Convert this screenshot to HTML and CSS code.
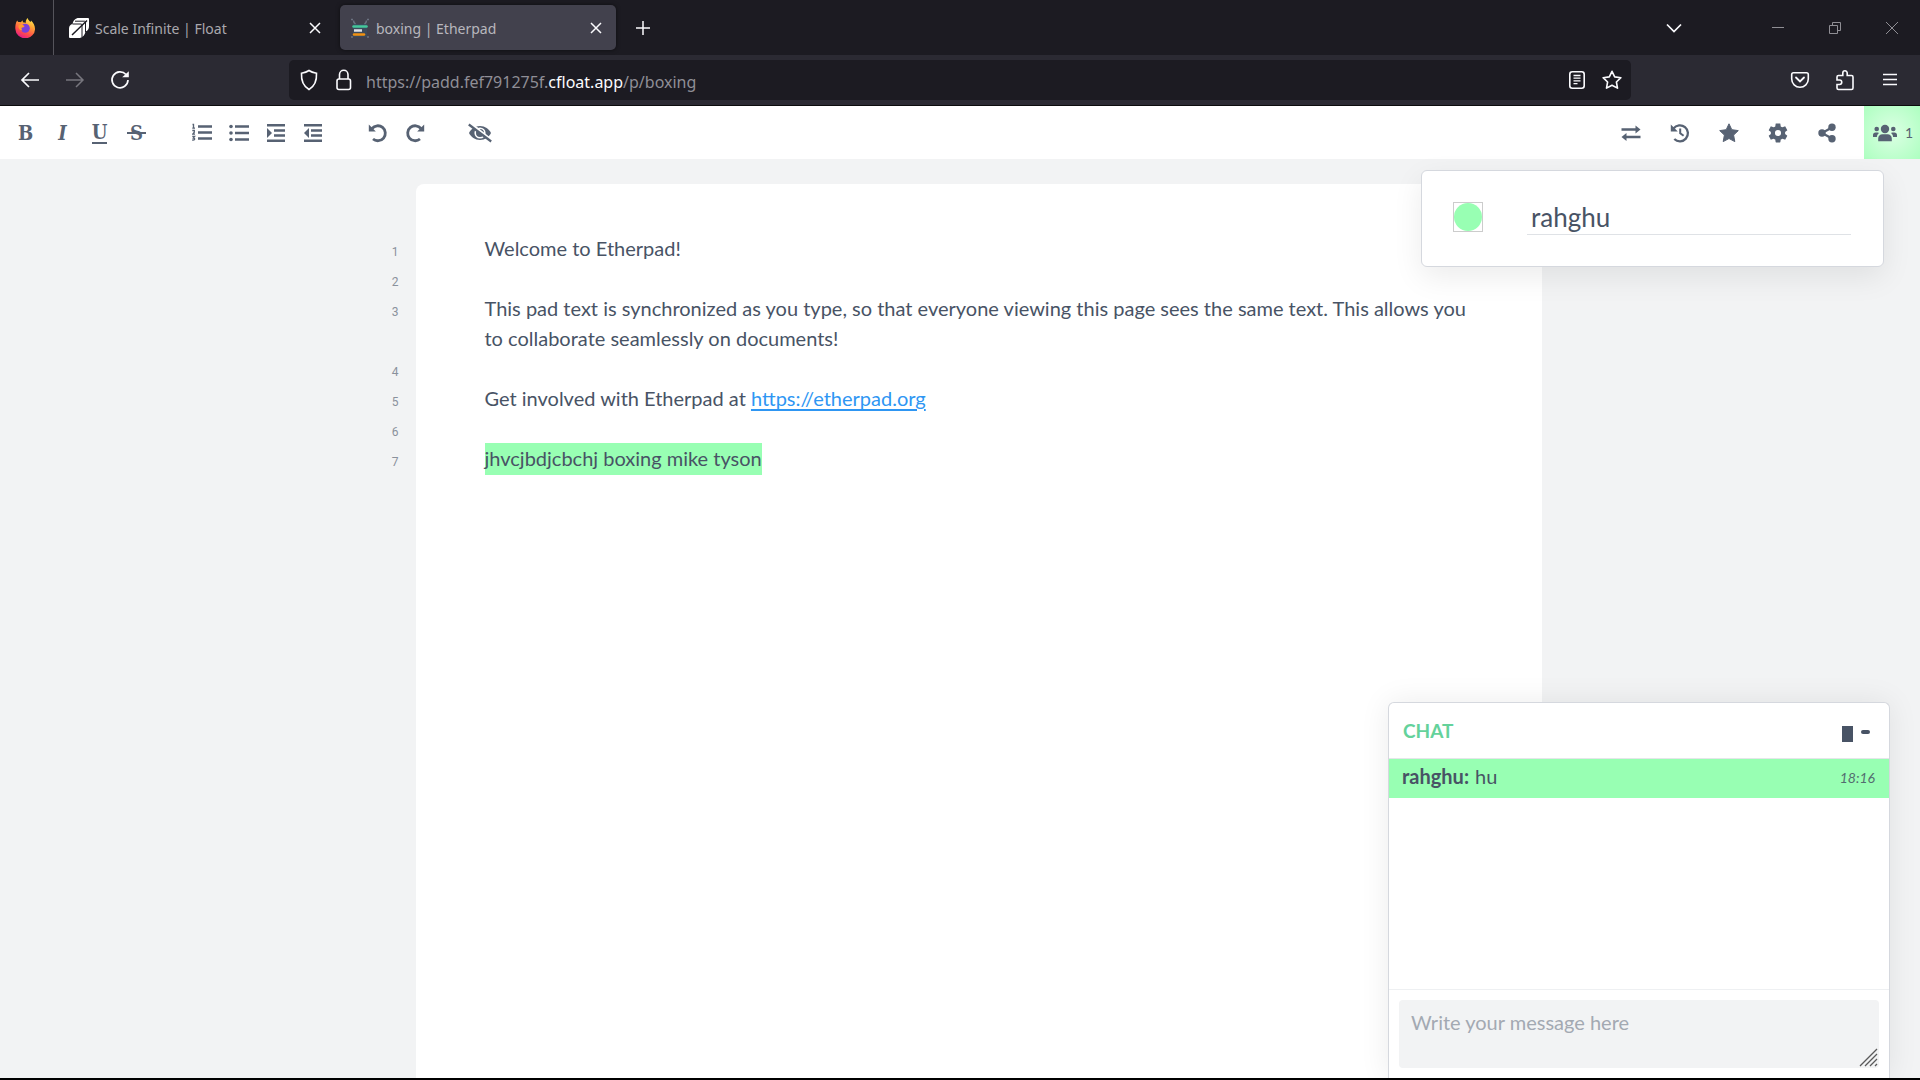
FILE: index.html
```
<!DOCTYPE html>
<html lang="en">
<head>
<meta charset="utf-8">
<title>boxing | Etherpad</title>
<link rel="stylesheet" href="styles.css">
</head>
<body>
<header class="browser">
  <div class="tabbar">
    <div class="brand">
      <svg width="20" height="20" viewBox="0 0 20 20" aria-hidden="true">
        <defs>
          <linearGradient id="fire" x1="0.8" y1="0" x2="0.3" y2="1"><stop offset="0" stop-color="#fff44f"/><stop offset="0.35" stop-color="#ffa436"/><stop offset="0.7" stop-color="#ff4f4a"/><stop offset="1" stop-color="#e3178b"/></linearGradient>
        </defs>
        <path fill="url(#fire)" d="M1.2 4.2c.3-.8.8-1.4 1.2-1.8.1.7.5 1.3 1 1.7C4.200 4 5 4 5.900 4.200 6.400 3.400 7.200 2.800 8 2.600 7.700 3.200 7.700 3.800 8 4.300c1.200.2 2.200.4 2.600 1 0-2.200.7-4.200 2.100-5.300.2 1.700 1.500 2.600 2.700 3.900.5-.3.6-.8.6-1.400 2.400 2.200 4 5 4 8.200a9.800 9.300 0 0 1-19.600.6C.1 8.600.4 6.200 1.200 4.200z"/>
        <circle cx="10.300" cy="10.300" r="4.500" fill="#7a3fdc"/>
        <path fill="#ff9a2e" d="M3.500 7.500c2.200-1.300 4.500-.6 6 .4-.2 1.200-1.600 1.300-2.400 1.700-1 .6-.7 2 .3 2.700-2.700.3-4.300-2.300-3.900-4.800z"/>
      </svg>
    </div>
    <div class="tab">
      <svg width="20" height="20" viewBox="0 0 20 20" aria-hidden="true">
        <path fill="#fff" d="M8.500 0H19a1 1 0 0 1 1 1v7c0 3-1 4.500-3.500 5.500C16 17 14 19 11 20H1a1 1 0 0 1-1-1v-8.500C0 8 1.500 6.500 3.500 6 4 3.200 5.500.8 8.500 0z"/>
        <path fill="none" stroke="#1c1b22" stroke-width="1" d="M3.500 6H12a1 1 0 0 1 1 1v12M6 3.200h9.500a1 1 0 0 1 1 1V14"/>
        <path fill="none" stroke="#1c1b22" stroke-width="1.500" d="M3 17 18 2.500"/>
      </svg>
      <span class="tab-title">Scale Infinite | Float</span>
      <button class="tab-close" aria-label="Close tab"><svg width="12" height="12" viewBox="0 0 12 12"><path d="M1 1l10 10M11 1 1 11" fill="none" stroke="#fbfbfe" stroke-width="1.500"/></svg></button>
    </div>
    <div class="tab tab-active">
      <svg width="20" height="20" viewBox="0 0 20 20" aria-hidden="true">
        <rect x="3" y="6" width="14" height="13" fill="#3b4a5c"/>
        <path d="M1 1.500h2M17 1.500h2M1 19h2M17 19h2M3.500 2.500q0 2 2 3.500M16.500 2.500q0 2-2 3.500" fill="none" stroke="#6b7280" stroke-width="1.500"/>
        <path d="M3.500 8.500h13" stroke="#44c79b" stroke-width="2.500" stroke-linecap="round"/>
        <path d="M4 12.500h8" stroke="#e0e2e6" stroke-width="2.500"/>
        <path d="M4 16.500h10" stroke="#f29111" stroke-width="2.500" stroke-linecap="round"/>
      </svg>
      <span class="tab-title">boxing | Etherpad</span>
      <button class="tab-close" aria-label="Close tab"><svg width="12" height="12" viewBox="0 0 12 12"><path d="M1 1l10 10M11 1 1 11" fill="none" stroke="#fbfbfe" stroke-width="1.500"/></svg></button>
    </div>
    <button class="new-tab" aria-label="New tab"><svg width="16" height="16" viewBox="0 0 16 16"><path d="M8 1v14M1 8h14" fill="none" stroke="#fbfbfe" stroke-width="1.500"/></svg></button>
    <button class="list-tabs" aria-label="List all tabs"><svg width="16" height="10" viewBox="0 0 16 10"><path d="M1 1.500l7 7 7-7" fill="none" stroke="#fbfbfe" stroke-width="1.700"/></svg></button>
    <div class="window-controls">
      <button aria-label="Minimize"><svg width="14" height="14" viewBox="0 0 14 14"><path d="M1 6.500h12" stroke="#8f8e94"/></svg></button>
      <button aria-label="Restore"><svg width="14" height="14" viewBox="0 0 14 14"><path d="M1.500 4.500h8v8h-8zM4.500 4.500v-3h8v8h-3" fill="none" stroke="#8f8e94"/></svg></button>
      <button aria-label="Close"><svg width="14" height="14" viewBox="0 0 14 14"><path d="M1 1l12 12M13 1 1 13" fill="none" stroke="#8f8e94"/></svg></button>
    </div>
  </div>
  <div class="navbar">
    <div class="nav-buttons">
      <button aria-label="Back"><svg width="20" height="20" viewBox="0 0 20 20"><path d="M19 10H2M9 3l-7 7 7 7" fill="none" stroke="#fbfbfe" stroke-width="1.700"/></svg></button>
      <button aria-label="Forward" disabled><svg width="20" height="20" viewBox="0 0 20 20"><path d="M1 10h17M11 3l7 7-7 7" fill="none" stroke="#77767e" stroke-width="1.500"/></svg></button>
      <button aria-label="Reload"><svg width="20" height="20" viewBox="0 0 20 20"><path d="M16 4.500A8 8 0 1 0 18 10" fill="none" stroke="#fbfbfe" stroke-width="1.700"/><path d="M18.800 1.200v6h-6.600z" fill="#fbfbfe"/></svg></button>
    </div>
    <div class="urlbar">
      <svg width="20" height="22" viewBox="0 0 20 22" aria-hidden="true"><path d="M10 1.500c2.500 1.800 5 2.300 7.500 2.700.4 7-1.200 12.500-7.500 16.300C3.700 16.700 2.100 11.200 2.500 4.200 5 3.800 7.500 3.300 10 1.500z" fill="none" stroke="#fbfbfe" stroke-width="1.600"/></svg>
      <svg width="20" height="22" viewBox="0 0 20 22" aria-hidden="true"><rect x="3" y="10" width="13.500" height="10.500" rx="2" fill="none" stroke="#fbfbfe" stroke-width="1.600"/><path d="M5.500 10V5.500a4.200 4.200 0 0 1 8.500 0V10" fill="none" stroke="#fbfbfe" stroke-width="1.600"/></svg>
      <span class="url">https://padd.fef791275f.<b>cfloat.app</b>/p/boxing</span>
      <button aria-label="Reader view"><svg width="20" height="20" viewBox="0 0 20 20"><rect x="2.800" y="1.800" width="14.400" height="16.400" rx="2.500" fill="none" stroke="#fbfbfe" stroke-width="1.600"/><path d="M6.500 5.500h7M6.500 8.200h7M6.500 10.900h7M6.500 13.600h4" stroke="#fbfbfe" stroke-width="1.300"/></svg></button>
      <button aria-label="Bookmark this page"><svg width="20" height="20" viewBox="0 0 20 20"><path d="M10 1.300l2.700 5.600 6.200.8-4.500 4.300 1.100 6.100L10 15.200l-5.500 2.900L5.600 12 1.100 7.700l6.200-.8z" fill="none" stroke="#fbfbfe" stroke-width="1.600" stroke-linejoin="round"/></svg></button>
    </div>
    <div class="nav-extras">
      <button aria-label="Save to Pocket"><svg width="20" height="20" viewBox="0 0 20 20"><path d="M3.500 2.800h13a1.800 1.800 0 0 1 1.800 1.800V9a8.300 8.300 0 0 1-16.600 0V4.600a1.800 1.800 0 0 1 1.800-1.800z" fill="none" stroke="#fbfbfe" stroke-width="1.600"/><path d="M6 7.500l4 4 4-4" fill="none" stroke="#fbfbfe" stroke-width="1.800" stroke-linecap="round"/></svg></button>
      <button aria-label="Extensions"><svg width="20" height="22" viewBox="0 0 20 22"><path d="M3.500 6.500h4.300V4a2.200 2.200 0 0 1 4.400 0v2.500h4.300a1.500 1.500 0 0 1 1.500 1.500v11a1.500 1.500 0 0 1-1.500 1.500H3.500A1.500 1.500 0 0 1 2 19v-3.500h2.500a2 2 0 0 0 0-4.500H2V8a1.500 1.500 0 0 1 1.500-1.500z" fill="none" stroke="#fbfbfe" stroke-width="1.600"/></svg></button>
      <button aria-label="Application menu"><svg width="20" height="20" viewBox="0 0 20 20"><path d="M3 4.500h14M3 9.500h14M3 14.500h14" stroke="#fbfbfe" stroke-width="1.500"/></svg></button>
    </div>
  </div>
</header>

<nav class="toolbar" aria-label="Pad toolbar">
  <div class="tool-group">
    <button class="tool letter" aria-label="Bold">B</button>
    <button class="tool letter letter-italic" aria-label="Italic">I</button>
    <button class="tool letter" aria-label="Underline"><span class="letter-under">U</span></button>
    <button class="tool letter" aria-label="Strikethrough"><span class="letter-strike">S</span></button>
  </div>
  <div class="tool-group">
    <button class="tool" aria-label="Ordered list"><svg width="20" height="20" viewBox="0 0 20 20"><path d="M6 3.500h14M6 9.500h14M6 15.500h14" stroke="currentColor" stroke-width="2.500"/><path d="M.5 1.500h1V5M.3 5.200h2.700M.3 7.500h2v1.800L.6 11.200H3M.3 13.500h2.300l-1.200 1.700c2 0 1.600 2.200-1.200 1.800" fill="none" stroke="currentColor" stroke-width="1.300"/></svg></button>
    <button class="tool" aria-label="Unordered list"><svg width="20" height="20" viewBox="0 0 20 20"><path d="M6 3.500h14M6 10h14M6 16.500h14" stroke="currentColor" stroke-width="2.500"/><g fill="currentColor"><circle cx="2" cy="3.500" r="1.800"/><circle cx="2" cy="10" r="1.800"/><circle cx="2" cy="16.500" r="1.800"/></g></svg></button>
    <button class="tool" aria-label="Indent"><svg width="20" height="20" viewBox="0 0 20 20"><path d="M1 2.200h18M8 7.400h11M8 12.600h11M1 17.800h18" stroke="currentColor" stroke-width="2.500"/><path d="M1 5v10l5-5z" fill="currentColor"/></svg></button>
    <button class="tool" aria-label="Outdent"><svg width="20" height="20" viewBox="0 0 20 20"><path d="M1 2.200h18M8 7.400h11M8 12.600h11M1 17.800h18" stroke="currentColor" stroke-width="2.500"/><path d="M6 5v10l-5-5z" fill="currentColor"/></svg></button>
  </div>
  <div class="tool-group">
    <button class="tool" aria-label="Undo"><svg width="20" height="20" viewBox="0 0 20 20"><path d="M4 5.500A7.500 7.500 0 1 1 5 16" fill="none" stroke="currentColor" stroke-width="2.800"/><path d="M.8 1.500v7h7z" fill="currentColor"/></svg></button>
    <button class="tool" aria-label="Redo"><svg width="20" height="20" viewBox="0 0 20 20"><path d="M16 5.500A7.500 7.500 0 1 0 15 16" fill="none" stroke="currentColor" stroke-width="2.800"/><path d="M19.200 1.500v7h-7z" fill="currentColor"/></svg></button>
  </div>
  <div class="tool-group">
    <button class="tool" aria-label="Clear authorship colors"><svg width="24" height="20" viewBox="0 0 24 20"><path d="M12 3C17 3 21 6 23 10c-2 4-6 7-11 7S3 14 1 10C3 6 7 3 12 3z" fill="currentColor"/><circle cx="12" cy="10" r="4.800" fill="none" stroke="#fff" stroke-width="1.600"/><path d="M1.500-.5 24 17.500" stroke="#fff" stroke-width="2.500"/><path d="M.8 1.500l22.400 17" stroke="currentColor" stroke-width="2.200"/></svg></button>
  </div>
  <div class="tool-group tool-group-right">
    <button class="tool" aria-label="Import/Export"><svg width="20" height="20" viewBox="0 0 20 20"><path d="M.5 6.500H16M4 14h15.500" stroke="currentColor" stroke-width="2.300"/><path d="M14.500 2.500v8l5-4zM5.500 10v8l-5-4z" fill="currentColor"/></svg></button>
    <button class="tool" aria-label="Timeslider"><svg width="20" height="20" viewBox="0 0 20 20"><path d="M3.500 5.500a8 8 0 1 1 .8 10.500" fill="none" stroke="currentColor" stroke-width="2.300"/><path d="M.8 1.500v7h7zM9.200 5.500h2v4.300l3 2.200-1.200 1.600-3.800-2.800z" fill="currentColor"/></svg></button>
    <button class="tool" aria-label="Saved revisions"><svg width="20" height="20" viewBox="0 0 20 20"><path d="M10 .8l2.800 5.900 6.500.9-4.700 4.500 1.200 6.500L10 15.500l-5.800 3.100 1.200-6.500L.7 7.600l6.500-.9z" fill="currentColor" stroke="currentColor" stroke-linejoin="round"/></svg></button>
    <button class="tool" aria-label="Settings"><svg width="20" height="20" viewBox="1.500 1.500 21 21"><path fill="currentColor" d="M19.430 12.980c.040-.320.070-.640.070-.980s-.030-.660-.070-.980l2.110-1.650c.190-.150.240-.420.120-.640l-2-3.460c-.120-.220-.390-.300-.610-.220l-2.490 1c-.520-.400-1.080-.730-1.690-.980l-.380-2.650C14.460 2.180 14.250 2 14 2h-4c-.250 0-.460.180-.490.420l-.380 2.650c-.610.250-1.170.590-1.690.980l-2.490-1c-.230-.090-.490 0-.610.220l-2 3.460c-.130.220-.070.490.120.640l2.110 1.650c-.040.320-.070.650-.070.980s.030.660.070.980l-2.110 1.650c-.190.150-.240.420-.120.640l2 3.460c.120.220.390.300.610.220l2.490-1c.520.400 1.080.730 1.690.980l.380 2.650c.030.240.240.420.490.420h4c.250 0 .460-.180.490-.420l.380-2.650c.610-.250 1.170-.590 1.690-.980l2.490 1c.230.090.490 0 .610-.220l2-3.460c.120-.220.070-.490-.120-.640zM12 15.200a3.200 3.200 0 1 1 0-6.400 3.200 3.200 0 0 1 0 6.400z"/></svg></button>
    <button class="tool" aria-label="Share"><svg width="20" height="20" viewBox="0 0 20 20"><path d="M15 4.500 5 10l10 5.500" fill="none" stroke="currentColor" stroke-width="2.300"/><g fill="currentColor"><circle cx="15" cy="4.200" r="3.700"/><circle cx="5" cy="10" r="3.700"/><circle cx="15" cy="15.800" r="3.700"/></g></svg></button>
  </div>
  <button class="users-button" aria-label="Show users">
    <svg width="24" height="18" viewBox="0 0 24 18"><g fill="currentColor"><circle cx="12" cy="5" r="4.200"/><circle cx="3.700" cy="5" r="2.300"/><circle cx="20.300" cy="5" r="2.300"/><path d="M5.200 17.200v-2.700c0-2.500 1.800-4.200 4.200-4.200h5.200c2.400 0 4.200 1.700 4.200 4.200v2.700zM0 13v-2c0-1.500 1-2.500 2.500-2.500h2.200c.5 0 1 .2 1.400.5C4.700 10 4 11.400 3.900 13zM24 13v-2c0-1.500-1-2.500-2.500-2.500h-2.200c-.5 0-1 .2-1.400.5 1.400 1 2.100 2.400 2.200 4z"/></g></svg>
    <span>1</span>
  </button>
</nav>

<main class="workspace">
  <div class="gutter" aria-hidden="true">
    <div class="line-number">1</div>
    <div class="line-number">2</div>
    <div class="line-number line-number-double">3</div>
    <div class="line-number">4</div>
    <div class="line-number">5</div>
    <div class="line-number">6</div>
    <div class="line-number">7</div>
  </div>
  <article class="sheet">
    <p>Welcome to Etherpad!</p>
    <p><br></p>
    <p>This pad text is synchronized as you type, so that everyone viewing this page sees the same text. This allows you to collaborate seamlessly on documents!</p>
    <p><br></p>
    <p>Get involved with Etherpad at <a href="https://etherpad.org">https://etherpad.org</a></p>
    <p><br></p>
    <p><span class="author-mark">jhvcjbdjcbchj boxing mike tyson</span></p>
  </article>

  <section class="users-popup" aria-label="Users">
    <button class="swatch" aria-label="Your color"><span></span></button>
    <input class="user-name" type="text" value="rahghu" aria-label="Your name">
  </section>

  <section class="chat" aria-label="Chat">
    <header class="chat-header">
      <h1>CHAT</h1>
      <button class="chat-stick" aria-label="Stick chat to screen"></button>
      <button class="chat-hide" aria-label="Hide chat"></button>
    </header>
    <div class="chat-messages">
      <p class="message"><b>rahghu:</b> <span>hu</span> <time>18:16</time></p>
    </div>
    <div class="chat-input">
      <textarea placeholder="Write your message here" aria-label="Chat message"></textarea>
      <svg class="grip" width="20" height="20" viewBox="0 0 20 20" aria-hidden="true"><path d="M2 19 19 2M7 19 19 7M12 19l7-7M17 19l2-2" stroke="#5a5a5a" stroke-width="1.300"/></svg>
    </div>
  </section>
</main>
</body>
</html>
```
FILE: styles.css
```
* { box-sizing: border-box; }

body {
  margin: 0;
  min-height: 100vh;
  display: flex;
  flex-direction: column;
  border-bottom: 2px solid #000;
  background: #f2f3f4;
  color: #485365;
  font-family: Lato, "Open Sans", sans-serif;
  font-size: 20px;
  line-height: 30px;
}

button {
  display: flex;
  align-items: center;
  justify-content: center;
  padding: 0;
  border: 0;
  background: none;
  color: inherit;
  font: inherit;
}

svg { flex: none; }
p { margin: 0; }

/* Browser chrome */
.browser {
  border-bottom: 1px solid #0c0c0d;
  background: #2b2a33;
  font-family: "Noto Sans", "Open Sans", sans-serif;
}

.tabbar {
  display: flex;
  align-items: center;
  height: 55px;
  background: #1c1b22;
}

.brand {
  display: flex;
  align-items: center;
  width: 54px;
  height: 55px;
  padding-left: 15px;
  border-right: 1px solid #55545b;
}

.tab {
  display: flex;
  align-items: center;
  gap: 6px;
  width: 276px;
  height: 45px;
  margin-left: 5px;
  padding: 0 14px 0 10px;
  border-radius: 5px;
  color: #a9a8ad;
  font-size: 14px;
}

.tab-active { color: #b8b7bd; background: #42414d; box-shadow: 0 0 4px #0008; }
.tab-title { flex: 1; padding-top: 2px; }
.tab-close { width: 12px; height: 20px; }
.new-tab { width: 40px; height: 40px; margin-left: 7px; }
.list-tabs { width: 40px; height: 40px; margin-left: auto; }
.window-controls { display: flex; margin-left: 55px; }
.window-controls button { width: 57px; height: 55px; }

.navbar {
  display: flex;
  align-items: center;
  height: 50px;
  padding: 0 8px 0 7px;
}

.nav-buttons { display: flex; flex: 0 0 282px; }
.nav-extras { display: flex; flex: 0 0 281px; justify-content: flex-end; }
.nav-buttons button, .nav-extras button { width: 45px; height: 40px; }

.urlbar {
  flex: 1;
  display: flex;
  align-items: center;
  gap: 15px;
  height: 40px;
  padding: 0 9px 0 10px;
  border-radius: 5px;
  background: #1c1b22;
}

.url { flex: 1; margin-left: -3px; padding-top: 3px; color: #8f8e96; font-size: 16px; }
.url b { color: #fbfbfe; font-weight: 400; }

/* Pad toolbar */
.toolbar {
  display: flex;
  align-items: center;
  gap: 28px;
  height: 53px;
  padding-left: 7px;
  background: #fff;
  color: #576273;
}

.tool-group { display: flex; }
.tool { width: 37px; height: 40px; }
.tool-group-right { margin-left: auto; margin-right: -15px; }
.tool-group-right .tool { width: 49px; }

.letter {
  font-family: "DejaVu Serif Condensed", "DejaVu Serif", serif;
  font-size: 20px;
  font-weight: 700;
  line-height: 24px;
}

.letter-italic { font-style: italic; }
.letter-under { border-bottom: 2px solid; line-height: 20px; }
.letter-strike {
  padding: 0 3px;
  background: linear-gradient(currentColor, currentColor) center / 100% 2px no-repeat;
}

.users-button {
  justify-content: flex-end;
  gap: 8px;
  width: 56px;
  height: 53px;
  padding-right: 7px;
  background: radial-gradient(circle at center, #dcffe4 0, #adffc0 100%);
  font-size: 14px;
}

/* Pad */
.workspace {
  position: relative;
  flex: 1;
  display: flex;
  justify-content: center;
  padding-top: 25px;
}

.gutter { width: 37px; padding: 53px 17px 0 0; }

.line-number {
  height: 30px;
  color: #8a919c;
  font-family: Roboto, sans-serif;
  font-size: 12px;
  text-align: right;
}

.line-number-double { height: 60px; }

.sheet {
  flex: 0 1 1126px;
  padding: 49px 69px;
  border-radius: 8px 8px 0 0;
  background: #fff;
}

.sheet a { color: #2e96f3; text-underline-offset: 3px; }
.author-mark { padding: 3px 0 5px; background: #98ffb3; }

.users-popup {
  position: absolute;
  top: 11px;
  right: 36px;
  display: flex;
  align-items: center;
  gap: 44px;
  width: 463px;
  height: 97px;
  padding: 0 32px 3px 31px;
  border: 1px solid #d5d8de;
  border-radius: 6px;
  background: #fff;
  box-shadow: 0 10px 30px #00000014;
}

.swatch { width: 30px; height: 30px; border: 1px solid #ccc; }
.swatch span { width: 28px; height: 28px; border-radius: 50%; background: #98ffb3; }

.user-name {
  flex: 1;
  min-width: 0;
  height: 36px;
  padding: 0 4px;
  border: 0;
  border-bottom: 1px solid #dfe2e6;
  background: none;
  color: #485365;
  font: 26px/32px Lato, sans-serif;
}

/* Chat */
.chat {
  position: absolute;
  right: 30px;
  bottom: 0;
  display: flex;
  flex-direction: column;
  width: 502px;
  height: 376px;
  border: 1px solid #d5d8de;
  border-bottom: 0;
  border-radius: 6px 6px 0 0;
  background: #fff;
  box-shadow: 0 0 30px #00000014;
}

.chat-header {
  display: flex;
  align-items: center;
  gap: 8px;
  height: 56px;
  padding: 0 19px 0 14px;
  border-bottom: 1px solid #e4e6e9;
}

.chat-header h1 { flex: 1; margin: 0; color: #64d29b; font-size: 19px; }
.chat-stick { width: 11px; height: 16px; margin-top: 6px; background: #485365; }
.chat-hide { width: 9px; height: 4px; margin-top: 2px; border-radius: 2px; background: #485365; }
.chat-messages { flex: 1; }

.message {
  display: flex;
  gap: 6px;
  height: 39px;
  padding: 2px 14px 0 13px;
  background: #98ffb3;
}

.message time { margin-left: auto; font-size: 14px; font-style: italic; line-height: 34px; opacity: 0.85; }

.chat-input {
  position: relative;
  padding: 10px;
  border-top: 1px solid #eef0f2;
}

.chat-input textarea {
  display: block;
  width: 100%;
  height: 68px;
  padding: 7px 12px;
  border: 0;
  border-radius: 4px;
  resize: none;
  background: #f2f3f4;
  color: #485365;
  font: 20px/30px Lato, sans-serif;
}

.chat-input textarea::placeholder { color: #a3a9b2; opacity: 1; }

.grip { position: absolute; right: 11px; bottom: 11px; }
```
